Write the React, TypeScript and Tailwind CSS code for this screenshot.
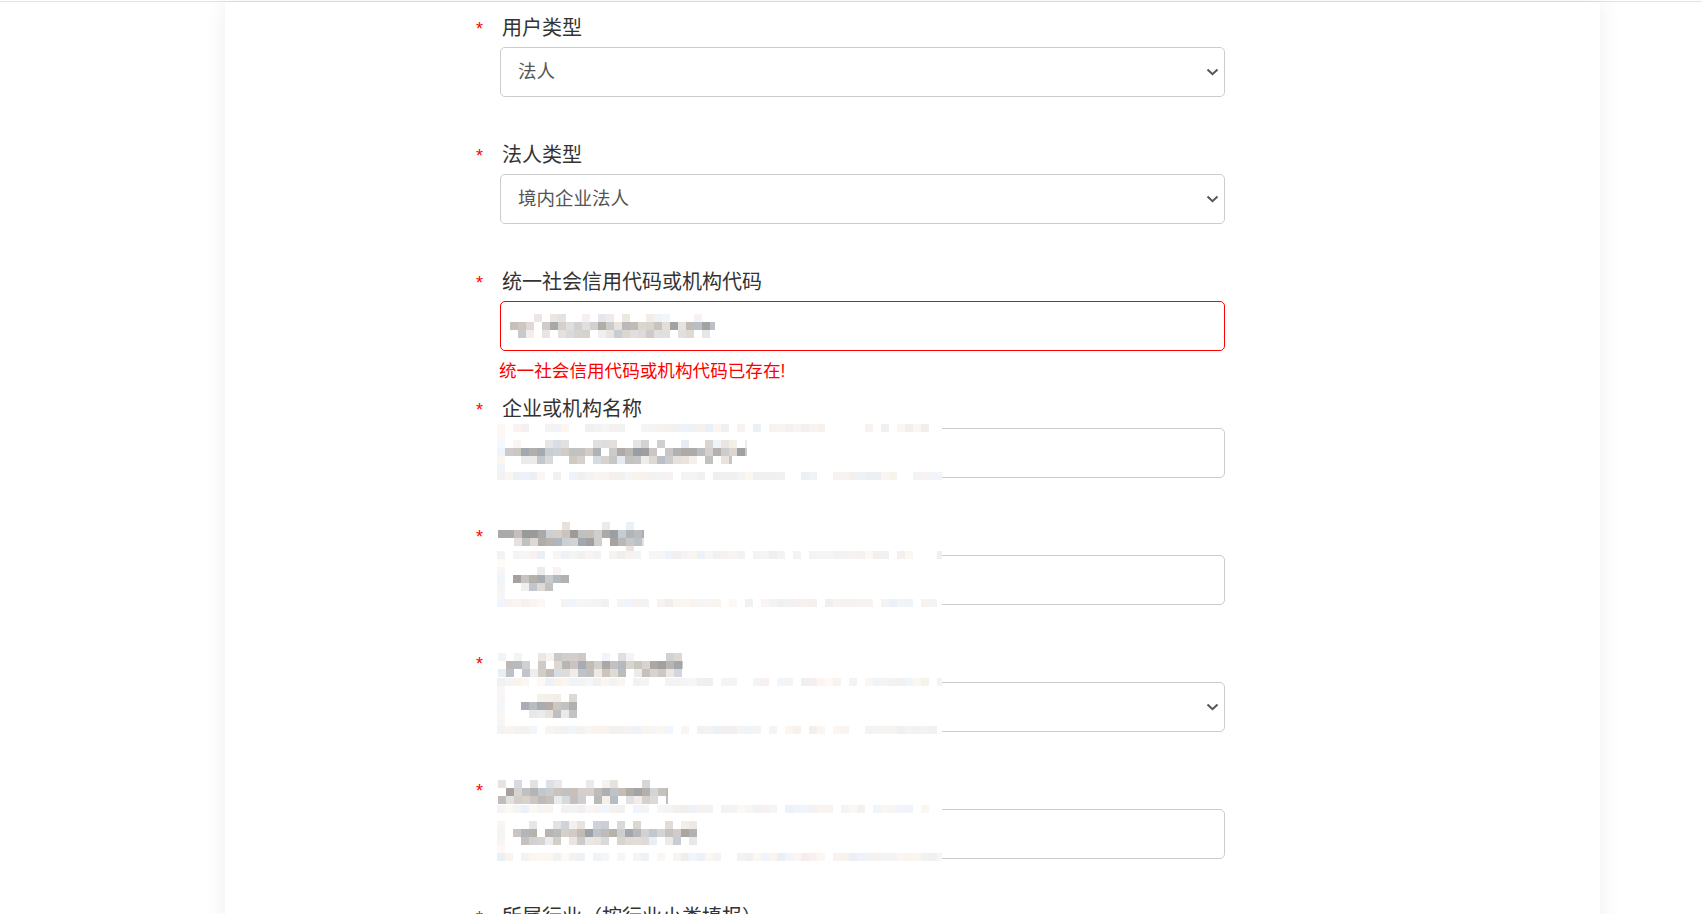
import React from "react";

type Row = [number, number, number, number, number, number];

function rng(seed: number) {
  let s = seed;
  return () => {
    s = (s * 16807) % 2147483647;
    return (s - 1) / 2147483646;
  };
}

const TINT: [number, number, number][] = [
  [0, 0, 0],
  [8, 3, -4],
  [-5, 0, 7],
  [5, -1, -3],
  [0, 0, 0],
];

function Mosaic({ w, h, seed, rows, bg }: { w: number; h: number; seed: number; rows: Row[]; bg?: boolean }) {
  const r = rng(seed);
  const rects: React.ReactNode[] = [];
  rows.forEach((row, i) => {
    const [y, x0, x1, dens, lo, hi] = row;
    for (let x = x0; x < x1; x += 8) {
      const p = r();
      const l = lo + r() * (hi - lo);
      const t = TINT[Math.floor(r() * TINT.length)];
      if (p < dens) {
        const c = (v: number) => Math.max(0, Math.min(255, Math.round(v)));
        rects.push(
          <rect
            key={`${i}-${x}`}
            x={x}
            y={y}
            width={Math.min(8, x1 - x)}
            height={8}
            fill={`rgb(${c(l + t[0])},${c(l + t[1])},${c(l + t[2])})`}
          />
        );
      }
    }
  });
  return (
    <svg width={w} height={h} shapeRendering="crispEdges" className="block">
      {bg && <rect x={0} y={0} width={w} height={h} fill="#ffffff" />}
      {rects}
    </svg>
  );
}

function Chevron() {
  return (
    <svg width="13" height="8" viewBox="0 0 13 8" className="block">
      <polyline points="1.5,1.5 6.5,6.2 11.5,1.5" fill="none" stroke="#555" strokeWidth="2" />
    </svg>
  );
}

function overlayRows(text: [number, number][]): Row[] {
  const rows: Row[] = [
    [0, 0, 445, 0.78, 239, 246],
    [48, 0, 445, 0.78, 239, 246],
    [8, 0, 8, 0.7, 244, 249],
    [16, 0, 8, 0.7, 244, 249],
    [24, 0, 8, 0.8, 243, 248],
    [32, 0, 8, 0.8, 243, 248],
    [40, 0, 8, 0.7, 244, 249],
  ];
  const dens = [0.55, 0.95, 0.8];
  const lo = [205, 155, 190];
  const hi = [245, 212, 240];
  text.forEach(([a, b], i) => rows.push([16 + i * 8, a, b, dens[i], lo[i], hi[i]]));
  return rows;
}

type Field = {
  label?: string;
  labelMosaic?: { w: number; h: number; seed: number; rows: Row[] };
  kind: "select" | "input";
  value?: string;
  error?: string;
  valueMosaic?: { w: number; h: number; seed: number; rows: Row[] };
  overlay?: { seed: number; text: [number, number][] };
};

const fields: Field[] = [
  { label: "用户类型", kind: "select", value: "法人" },
  { label: "法人类型", kind: "select", value: "境内企业法人" },
  {
    label: "统一社会信用代码或机构代码",
    kind: "input",
    error: "统一社会信用代码或机构代码已存在!",
    valueMosaic: {
      w: 205,
      h: 24,
      seed: 71,
      rows: [
        [0, 24, 200, 0.5, 222, 246],
        [8, 0, 205, 0.95, 160, 225],
        [16, 8, 205, 0.85, 200, 242],
      ],
    },
  },
  {
    label: "企业或机构名称",
    kind: "input",
    overlay: { seed: 113, text: [[8, 250], [8, 250], [16, 235]] },
  },
  {
    labelMosaic: {
      w: 146,
      h: 32,
      seed: 907,
      rows: [
        [0, 64, 136, 0.5, 215, 242],
        [8, 0, 146, 0.95, 150, 215],
        [16, 16, 146, 0.95, 160, 225],
        [24, 80, 136, 0.3, 215, 238],
      ],
    },
    kind: "input",
    overlay: { seed: 331, text: [[32, 72], [16, 72], [24, 56]] },
  },
  {
    labelMosaic: {
      w: 185,
      h: 24,
      seed: 433,
      rows: [
        [0, 0, 185, 0.5, 200, 246],
        [8, 0, 185, 0.95, 160, 215],
        [16, 0, 185, 0.9, 185, 238],
      ],
    },
    kind: "select",
    overlay: { seed: 557, text: [[40, 80], [24, 80], [32, 80]] },
  },
  {
    labelMosaic: {
      w: 170,
      h: 24,
      seed: 619,
      rows: [
        [0, 0, 170, 0.4, 212, 246],
        [8, 8, 170, 0.9, 150, 215],
        [16, 0, 170, 0.85, 185, 238],
      ],
    },
    kind: "input",
    overlay: { seed: 773, text: [[32, 200], [16, 200], [24, 200]] },
  },
  { label: "所属行业（按行业小类填报）", kind: "input" },
];

function FieldRow({ f }: { f: Field }) {
  return (
    <div className="grid grid-cols-[26px_725px] h-[127px] shrink-0">
      <div className="relative">
        <span className="absolute left-[2px] top-[9px] text-[18px] leading-none text-[#ff0000]">*</span>
      </div>
      <div>
        <div className="h-[30px] flex items-center text-[20px] text-[#333333] leading-none">
          {f.label && <span className="pl-[2px] translate-y-[2px]">{f.label}</span>}
          {f.labelMosaic && (
            <div className="-ml-[2px] translate-y-[4px]">
              <Mosaic {...f.labelMosaic} />
            </div>
          )}
        </div>
        <div
          className={`relative mt-[6px] h-[50px] rounded-[5px] border bg-white flex items-center ${
            f.error ? "border-[#ff0000]" : "border-[#cccccc]"
          }`}
        >
          {f.value && <span className="pl-[17px] text-[18.5px] text-[#555555] leading-none">{f.value}</span>}
          {f.valueMosaic && (
            <div className="pl-[9px]">
              <Mosaic {...f.valueMosaic} />
            </div>
          )}
          {f.kind === "select" && (
            <div className="absolute right-[5px] top-[20px]">
              <Chevron />
            </div>
          )}
          {f.overlay && (
            <div className="absolute left-[-4px] top-[-5px]">
              <Mosaic w={445} h={56} seed={f.overlay.seed} rows={overlayRows(f.overlay.text)} bg />
            </div>
          )}
        </div>
        <div className="h-[41px] flex items-center">
          {f.error && <span className="text-[17.6px] text-[#ff0000] leading-none -ml-[1px]">{f.error}</span>}
        </div>
      </div>
    </div>
  );
}

export default function App() {
  return (
    <div
      className="h-[914px] w-[1702px] overflow-hidden bg-white"
      style={{ fontFamily: '"Liberation Sans", "Noto Sans CJK SC", sans-serif' }}
    >
      <div className="h-[1px] bg-white" />
      <div className="h-[1px] bg-[#e3e3e3]" />
      <div className="ml-[225px] w-[1375px] h-[930px] bg-white shadow-[0_0_22px_rgba(0,0,0,0.07)] pt-[9px]">
        <div className="ml-[249px] w-[751px] flex flex-col">
          {fields.map((f, i) => (
            <FieldRow key={i} f={f} />
          ))}
        </div>
      </div>
    </div>
  );
}
